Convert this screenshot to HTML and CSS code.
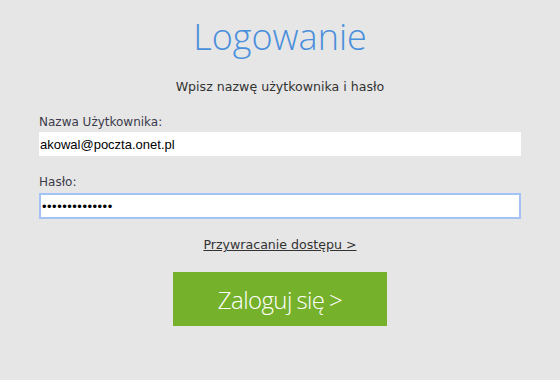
FILE: index.html
```html
<!DOCTYPE html>
<html lang="pl">
<head>
    <meta charset="UTF-8">
    <title>Logowanie</title>
    <link rel="stylesheet" href="styles.css">
</head>
<body>
    <div class="login-box">
        <h1 class="login-title">Logowanie</h1>
        <p class="login-hint">Wpisz nazwę użytkownika i hasło</p>

        <form class="login-form">
            <div class="form-group">
                <label for="userInput">Nazwa Użytkownika:</label>
                <input type="text" id="userInput" class="form-input" value="akowal@poczta.onet.pl">
            </div>
            <div class="form-group">
                <label for="passInput">Hasło:</label>
                <input type="password" id="passInput" class="form-input focused" value="haslo123456789">
            </div>
            <div class="recover">
                <a href="#" class="recover-link">Przywracanie dostępu &gt;</a>
            </div>
            <div class="submit-row">
                <button type="submit" class="login-btn">Zaloguj się &gt;</button>
            </div>
        </form>
    </div>
</body>
</html>
```

FILE: styles.css
```css
body {
    margin: 0;
    background: #e6e6e6;
    font-family: "DejaVu Sans", Verdana, sans-serif;
    color: #333;
}
.login-box {
    width: 482px;
    margin: 0 auto;
    padding-top: 13px;
}
.login-title {
    margin: 0;
    text-align: center;
    font-family: "Open Sans", sans-serif;
    font-weight: 300;
    font-size: 36px;
    line-height: 48px;
    color: #4a8fdc;
}
.login-hint {
    margin: 18px 0 0;
    text-align: center;
    font-size: 12.6px;
    line-height: 16px;
    color: #333;
}
.login-form {
    margin-top: 19px;
}
.form-group + .form-group {
    margin-top: 18px;
}
.form-group label {
    display: block;
    font-size: 12px;
    line-height: 16px;
    margin-bottom: 2px;
    color: #3b3b4a;
}
.form-input {
    display: block;
    width: 100%;
    height: 24px;
    box-sizing: border-box;
    border: none;
    background: #fff;
    padding: 0 1px;
    font-family: "Liberation Sans", Arial, sans-serif;
    font-size: 13px;
    color: #000;
    outline: none;
}
.form-input.focused {
    height: 26px;
    margin-top: 3px;
    border: 2px solid #a3c2f5;
    padding: 0 0 0 1px;
    letter-spacing: 0.5px;
}
.recover {
    text-align: center;
    margin-top: 17px;
    line-height: 16px;
}
.recover-link {
    font-size: 12.6px;
    color: #333;
}
.submit-row {
    display: flex;
    justify-content: center;
    margin-top: 19px;
}
.login-btn {
    width: 214px;
    height: 54px;
    border: none;
    background: #76b12b;
    color: #fff;
    font-family: "Open Sans", sans-serif;
    font-weight: 300;
    font-size: 24px;
    letter-spacing: -0.6px;
    word-spacing: -1px;
    cursor: pointer;
}
```
